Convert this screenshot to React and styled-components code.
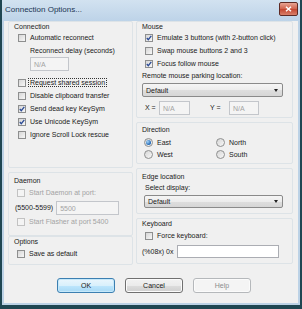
import React from 'react';
import styled, {createGlobalStyle, css} from 'styled-components';

const GlobalStyle = createGlobalStyle`
  html, body {
    margin: 0;
    padding: 0;
    background: #1f4652;
  }
  body {
    font-family: 'Liberation Sans', Arial, sans-serif;
  }
`;

const Screen = styled.div`
  width: 302px;
  height: 309px;
  background: #1f4652;
  overflow: hidden;
`;

const Frame = styled.div`
  width: 298px;
  height: 305px;
  margin-left: 2px;
  background: #bcd2e6;
  display: flex;
  flex-direction: column;
`;

const TitleBar = styled.div`
  height: 21px;
  display: flex;
  align-items: center;
  justify-content: space-between;
  padding: 0 2px 0 3px;
  background: linear-gradient(#d2e2f0, #bdd3e8);
`;

const Title = styled.span`
  font-size: 8px;
  color: #1b3553;
  margin-top: -2px;
`;

const CloseButton = styled.span`
  width: 17px;
  height: 12px;
  margin-top: -3px;
  border: 1px solid #5f2a24;
  border-radius: 2px;
  background: linear-gradient(#e8a493, #d0614b 50%, #c3452f 51%, #d9806a);
  display: flex;
  align-items: center;
  justify-content: center;
`;

const Client = styled.div`
  flex: 1;
  margin: 0 2px 2px 2px;
  background: #f0f0f0;
  display: flex;
  flex-direction: column;
  padding: 0 5px 0 4px;
  color: #1a1a1a;
  font-size: 7px;
`;

const Columns = styled.div`
  display: grid;
  grid-template-columns: 125px 157px;
  column-gap: 3px;
`;

const Column = styled.div`
  display: flex;
  flex-direction: column;
`;

const Group = styled.div`
  box-sizing: border-box;
  height: ${(p) => p.$h}px;
  margin-top: ${(p) => p.$mt || 0}px;
  border: 1px solid #dde3e7;
  border-radius: 2px;
  padding-left: 5px;
  display: flex;
  flex-direction: column;
`;

const Label = styled.div`
  height: ${(p) => p.$h || 10}px;
  margin-top: ${(p) => p.$mt || 0}px;
  margin-left: ${(p) => p.$indent || 0}px;
  line-height: ${(p) => p.$h || 10}px;
  white-space: nowrap;
  color: ${(p) => (p.$disabled ? '#a3a3a3' : '#1a1a1a')};
`;

const Row = styled.div`
  height: ${(p) => p.$h || 13}px;
  margin-top: ${(p) => p.$mt || 0}px;
  margin-left: ${(p) => p.$indent || 0}px;
  display: flex;
  align-items: center;
  gap: ${(p) => p.$gap || 0}px;
  white-space: nowrap;
`;

const Box = styled.span`
  box-sizing: border-box;
  width: 8px;
  height: 8px;
  flex: none;
  border: 1px solid ${(p) => (p.$disabled ? '#c2c2c2' : '#8e8f8f')};
  background: ${(p) =>
    p.$disabled ? '#f4f4f4' : 'linear-gradient(135deg, #d6d6d6, #f7f7f7)'};
  display: flex;
  align-items: center;
  justify-content: center;
  margin-right: 3px;
`;

const Round = styled(Box)`
  width: 9px;
  height: 9px;
  border-radius: 50%;
  margin-right: 3px;
`;

const Dot = styled.span`
  width: 5px;
  height: 5px;
  border-radius: 50%;
  background: radial-gradient(circle at 35% 35%, #a9d6f7, #1c64b4 70%);
`;

const Caption = styled.span`
  color: ${(p) => (p.$disabled ? '#a3a3a3' : '#1a1a1a')};
  padding: 0 1px;
  ${(p) =>
    p.$focus &&
    css`
      outline: 1px dotted #333;
      outline-offset: 0;
    `}
`;

const Field = styled.span`
  box-sizing: border-box;
  width: ${(p) => p.$w}px;
  height: ${(p) => p.$h || 14}px;
  border: 1px solid ${(p) => (p.$disabled ? '#c3c6cb' : '#abadb3')};
  background: ${(p) => (p.$disabled ? '#f4f4f4' : '#fff')};
  color: #a3a3a3;
  display: flex;
  align-items: center;
  padding-left: 3px;
  flex: none;
`;

const Select = styled.span`
  box-sizing: border-box;
  width: ${(p) => p.$w}px;
  height: ${(p) => p.$h || 14}px;
  margin-top: ${(p) => p.$mt || 0}px;
  margin-left: ${(p) => p.$indent || 0}px;
  border: 1px solid #8a8a8a;
  border-radius: 2px;
  background: linear-gradient(#f5f5f5, #ececec 50%, #dedede 51%, #d6d6d6);
  display: flex;
  align-items: center;
  justify-content: space-between;
  padding: 0 4px 0 3px;
`;

const Arrow = styled.span`
  width: 0;
  height: 0;
  border-left: 2.5px solid transparent;
  border-right: 2.5px solid transparent;
  border-top: 3px solid #222;
`;

const ButtonRow = styled.div`
  display: flex;
  gap: 10px;
  margin-top: 13px;
  padding-left: 49px;
`;

const Button = styled.span`
  box-sizing: border-box;
  width: 58px;
  height: 15px;
  border-radius: 3px;
  display: flex;
  align-items: center;
  justify-content: center;
  border: 1px solid ${(p) => (p.$default ? '#3c7fb1' : p.$disabled ? '#b5b8bb' : '#707070')};
  color: ${(p) => (p.$disabled ? '#8c8c8c' : '#1a1a1a')};
  background: ${(p) =>
    p.$disabled
      ? '#f4f4f4'
      : p.$default
      ? 'linear-gradient(#eaf6fd, #d9f0fc 50%, #bee6fd 51%, #a7d9f5)'
      : 'linear-gradient(#f2f2f2, #ebebeb 50%, #dddddd 51%, #cfcfcf)'};
  box-shadow: ${(p) => (p.$default ? 'inset 0 0 0 1px #c5e8fa' : 'inset 0 0 0 1px #fbfbfb')};
`;

const Check = ({checked, disabled, focus, children, indent}) => (
  <Row $indent={indent}>
    <Box $disabled={disabled}>
      {checked && (
        <svg width="6" height="6" viewBox="0 0 6 6">
          <path d="M0.8 3 L2.3 4.7 L5.3 0.9" fill="none" stroke="#2a4a95" strokeWidth="1.3" />
        </svg>
      )}
    </Box>
    <Caption $disabled={disabled} $focus={focus}>
      {children}
    </Caption>
  </Row>
);

const RadioCell = styled(Row)`
  width: 70px;
`;

const Radio = ({checked, children}) => (
  <RadioCell $h={12.5}>
    <Round>{checked && <Dot />}</Round>
    <Caption>{children}</Caption>
  </RadioCell>
);

const RadioGrid = styled.div`
  display: grid;
  grid-template-columns: 72px 70px;
  margin-top: 1px;
  margin-left: 2px;
`;

const AxisLabel = styled(Label)`
  width: ${(p) => p.$w}px;
  margin-left: ${(p) => p.$ml || 0}px;
`;

export default function App() {
  return (
    <Screen>
      <GlobalStyle />
      <Frame>
        <TitleBar>
          <Title>Connection Options...</Title>
          <CloseButton>
            <svg width="7" height="6" viewBox="0 0 7 6">
              <path d="M1 0.8 L6 5.2 M6 0.8 L1 5.2" stroke="#fff" strokeWidth="1.5" />
            </svg>
          </CloseButton>
        </TitleBar>
        <Client>
          <Columns>
            <Column>
              <Group $h={147}>
                <Label $h={9}>Connection</Label>
                <Check indent={4}>Automatic reconnect</Check>
                <Label $mt={2} $indent={16}>Reconnect delay (seconds)</Label>
                <Row $h={14} $mt={1} $indent={16}>
                  <Field $w={39} $disabled>N/A</Field>
                </Row>
                <Row $h={5} />
                <Check indent={4} focus>Request shared session</Check>
                <Check indent={4}>Disable clipboard transfer</Check>
                <Check indent={4} checked>Send dead key KeySym</Check>
                <Check indent={4} checked>Use Unicode KeySym</Check>
                <Check indent={4}>Ignore Scroll Lock rescue</Check>
              </Group>
              <Group $h={64} $mt={4}>
                <Label $mt={3}>Daemon</Label>
                <Check indent={3} disabled>Start Daemon at port:</Check>
                <Row $h={14} $mt={2} $indent={1} $gap={3}>
                  <Label $h={14}>(5500-5599)</Label>
                  <Field $w={63} $disabled>5500</Field>
                </Row>
                <Check indent={3} disabled>Start Flasher at port 5400</Check>
              </Group>
              <Group $h={29}>
                <Label>Options</Label>
                <Check indent={3}>Save as default</Check>
              </Group>
            </Column>
            <Column>
              <Group $h={97}>
                <Label $h={9}>Mouse</Label>
                <Check indent={3} checked>Emulate 3 buttons (with 2-button click)</Check>
                <Check indent={3}>Swap mouse buttons 2 and 3</Check>
                <Check indent={3} checked>Focus follow mouse</Check>
                <Label $mt={1}>Remote mouse parking location:</Label>
                <Select $w={141} $mt={2}>
                  Default
                  <Arrow />
                </Select>
                <Row $h={14} $mt={4} $indent={3}>
                  <AxisLabel $h={14} $w={14}>X =</AxisLabel>
                  <Field $w={31} $disabled>N/A</Field>
                  <AxisLabel $h={14} $w={19} $ml={20}>Y =</AxisLabel>
                  <Field $w={30} $disabled>N/A</Field>
                </Row>
              </Group>
              <Group $h={42} $mt={4}>
                <Label $mt={2}>Direction</Label>
                <RadioGrid>
                  <Radio checked>East</Radio>
                  <Radio>North</Radio>
                  <Radio>West</Radio>
                  <Radio>South</Radio>
                </RadioGrid>
              </Group>
              <Group $h={46} $mt={4}>
                <Label $mt={3}>Edge location</Label>
                <Label $mt={1} $indent={3}>Select display:</Label>
                <Select $w={139} $h={13} $mt={2} $indent={2}>
                  Default
                  <Arrow />
                </Select>
              </Group>
              <Group $h={46} $mt={4}>
                <Label>Keyboard</Label>
                <Check indent={3}>Force keyboard:</Check>
                <Row $h={13} $mt={3} $gap={3}>
                  <Label $h={13}>(%08x) 0x</Label>
                  <Field $w={102} $h={13} />
                </Row>
              </Group>
            </Column>
          </Columns>
          <ButtonRow>
            <Button $default>OK</Button>
            <Button>Cancel</Button>
            <Button $disabled>Help</Button>
          </ButtonRow>
        </Client>
      </Frame>
    </Screen>
  );
}
